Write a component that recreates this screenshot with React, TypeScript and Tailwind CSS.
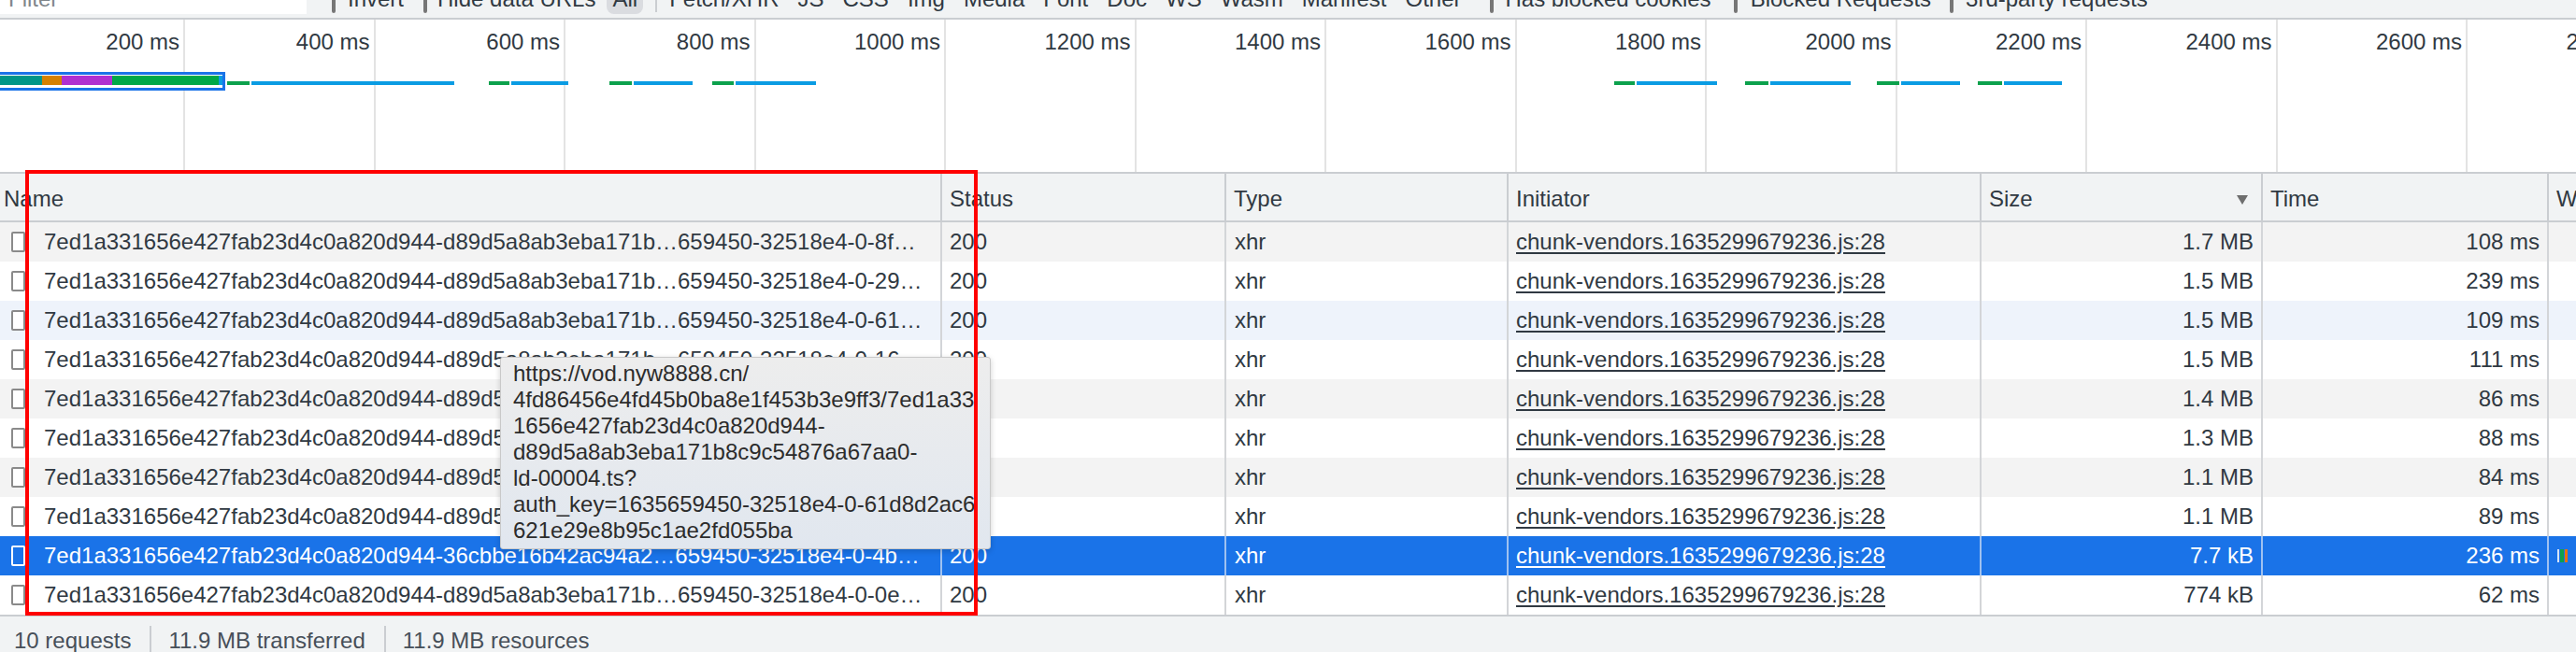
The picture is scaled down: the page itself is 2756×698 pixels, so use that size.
import React from 'react';

const gridX = Array.from({ length: 14 }, (_, i) => 197 + 203.5 * i);

// [greenStart, greenEnd, blueEnd] in px along the overview
const bars = [
  [243, 267, 486],
  [523, 545, 608],
  [652, 676, 741],
  [762, 785, 873],
  [1727, 1749, 1837],
  [1867, 1892, 1980],
  [2008, 2032, 2097],
  [2116, 2142, 2206],
];

const typeFilters = ['Fetch/XHR', 'JS', 'CSS', 'Img', 'Media', 'Font', 'Doc', 'WS', 'Wasm', 'Manifest', 'Other'];

const prefix = '7ed1a331656e427fab23d4c0a820d944-';

const rows = [
  { name: prefix + 'd89d5a8ab3eba171b…659450-32518e4-0-8f…', size: '1.7 MB', time: '108 ms', bg: 'bg-[#f3f3f3]' },
  { name: prefix + 'd89d5a8ab3eba171b…659450-32518e4-0-29…', size: '1.5 MB', time: '239 ms', bg: 'bg-white' },
  { name: prefix + 'd89d5a8ab3eba171b…659450-32518e4-0-61…', size: '1.5 MB', time: '109 ms', bg: 'bg-[#eef3fb]' },
  { name: prefix + 'd89d5a8ab3eba171b…659450-32518e4-0-16…', size: '1.5 MB', time: '111 ms', bg: 'bg-white' },
  { name: prefix + 'd89d5a8ab3eba171b…659450-32518e4-0-3a…', size: '1.4 MB', time: '86 ms', bg: 'bg-[#f3f3f3]' },
  { name: prefix + 'd89d5a8ab3eba171b…659450-32518e4-0-d1…', size: '1.3 MB', time: '88 ms', bg: 'bg-white' },
  { name: prefix + 'd89d5a8ab3eba171b…659450-32518e4-0-5c…', size: '1.1 MB', time: '84 ms', bg: 'bg-[#f3f3f3]' },
  { name: prefix + 'd89d5a8ab3eba171b…659450-32518e4-0-7e…', size: '1.1 MB', time: '89 ms', bg: 'bg-white' },
  { name: prefix + '36cbbe16b42ac94a2…659450-32518e4-0-4b…', size: '7.7 kB', time: '236 ms', bg: 'bg-[#1a73e8]', selected: true },
  { name: prefix + 'd89d5a8ab3eba171b…659450-32518e4-0-0e…', size: '774 kB', time: '62 ms', bg: 'bg-white' },
];

const tooltipLines = [
  'https://vod.nyw8888.cn/',
  '4fd86456e4fd45b0ba8e1f453b3e9ff3/7ed1a33',
  '1656e427fab23d4c0a820d944-',
  'd89d5a8ab3eba171b8c9c54876a67aa0-',
  'ld-00004.ts?',
  'auth_key=1635659450-32518e4-0-61d8d2ac6',
  '621e29e8b95c1ae2fd055ba',
];

const cols = 'grid grid-cols-[1006px_304px_302px_506px_301px_306px_1fr]';

function Check() {
  return <span className="w-[22px] h-[24px] shrink-0 rounded-[5px] border-2 border-[#767676] bg-white" />;
}

function Toolbar() {
  return (
    <div className="h-[21px] overflow-hidden bg-[#f1f3f4] border-b-2 border-[#cacdd1]">
      <div className="flex items-center h-[28px] -mt-[15px] whitespace-nowrap text-[24px] leading-[28px] text-[#303942]">
        <div className="w-[328px] h-[31px] bg-white flex items-center pl-[9px] text-[#80868b]">Filter</div>
        <span className="ml-[27px]"><Check /></span>
        <span className="ml-[13px]">Invert</span>
        <span className="ml-[21px]"><Check /></span>
        <span className="ml-[11px]">Hide data URLs</span>
        <span className="ml-[12px] h-[32px] px-[6px] rounded-[8px] bg-[#dadce0] flex items-center">All</span>
        <span className="ml-[13px] w-[2px] h-[28px] bg-[#cacdd1]" />
        <div className="ml-[13px] flex gap-[20px]">
          {typeFilters.map((t) => (
            <span key={t}>{t}</span>
          ))}
        </div>
        <span className="ml-[30px]"><Check /></span>
        <span className="ml-[13px]">Has blocked cookies</span>
        <span className="ml-[24px]"><Check /></span>
        <span className="ml-[14px]">Blocked Requests</span>
        <span className="ml-[20px]"><Check /></span>
        <span className="ml-[13px]">3rd-party requests</span>
      </div>
    </div>
  );
}

function Overview() {
  return (
    <div className="relative h-[163px] bg-white overflow-hidden">
      {gridX.map((x, i) => (
        <React.Fragment key={i}>
          <div className="absolute top-0 bottom-0 w-[2px] bg-[#e3e3e3]" style={{ left: x - 1 }} />
          <span
            className="absolute top-[10px] text-[24px] leading-[28px] text-[#303942] whitespace-nowrap"
            style={{ right: 2756 - x + 5 }}
          >
            {(i + 1) * 200} ms
          </span>
        </React.Fragment>
      ))}

      {/* selected request in the overview */}
      <div className="absolute left-[-3px] top-[56px] w-[244px] h-[20px] border-[3px] border-[#1a73e8] pt-[1px] bg-white">
        <div className="flex h-[10px]">
          <span className="w-[45px] bg-[#009688]" />
          <span className="w-[21px] bg-[#d68100]" />
          <span className="w-[54px] bg-[#b02fd0]" />
          <span className="w-[114px] bg-[#00a847]" />
          <span className="w-[4px] bg-[#0a9ce3]" />
        </div>
      </div>

      {bars.map(([g0, g1, b1], i) => (
        <React.Fragment key={i}>
          <span className="absolute top-[66px] h-[4px] bg-[#0ca14c]" style={{ left: g0, width: g1 - g0 }} />
          <span className="absolute top-[66px] h-[4px] bg-[#0a9ce3]" style={{ left: g1 + 2, width: b1 - g1 - 2 }} />
        </React.Fragment>
      ))}
    </div>
  );
}

function Header() {
  const cell = 'flex items-center h-full border-l-2 border-[#cacdd1] pl-[8px] pt-[4px] overflow-hidden whitespace-nowrap';
  return (
    <div className={`${cols} h-[54px] bg-[#f1f3f4] border-t-2 border-b-2 border-[#cacdd1] text-[24px] leading-[28px] text-[#303942]`}>
      <div className="flex items-center h-full pl-[4px] pt-[4px]">Name</div>
      <div className={cell}>Status</div>
      <div className={cell}>Type</div>
      <div className={cell}>Initiator</div>
      <div className={`${cell} justify-between pr-[14px]`}>
        <span>Size</span>
        <svg width="12" height="11" viewBox="0 0 12 11">
          <polygon points="0,1 12,1 6,11" fill="#6e6e6e" />
        </svg>
      </div>
      <div className={cell}>Time</div>
      <div className={`${cell} pl-[6px]`}>Waterfall</div>
    </div>
  );
}

function Row({ r }: { r: (typeof rows)[number] }) {
  const sel = !!r.selected;
  const text = sel ? 'text-white' : 'text-[#303942]';
  const cell = `flex items-center h-full border-l-2 ${sel ? 'border-[#9fc1f0]' : 'border-[#d3d5d8]'} overflow-hidden whitespace-nowrap`;
  return (
    <div className={`${cols} h-[42px] ${r.bg} ${text} text-[24px] leading-[28px]`}>
      <div className="flex items-center h-full pl-[12px] overflow-hidden whitespace-nowrap">
        <span
          className={`w-[15px] h-[22px] shrink-0 rounded-[2px] border-2 ${sel ? 'border-white' : 'border-[#8a8a8a] bg-white'}`}
        />
        <span className="ml-[20px]">{r.name}</span>
      </div>
      <div className={`${cell} pl-[8px]`}>200</div>
      <div className={`${cell} pl-[9px]`}>xhr</div>
      <div className={`${cell} pl-[8px]`}>
        <span className="underline underline-offset-[3px]">chunk-vendors.1635299679236.js:28</span>
      </div>
      <div className={`${cell} justify-end pr-[8px]`}>{r.size}</div>
      <div className={`${cell} justify-end pr-[8px]`}>{r.time}</div>
      <div className={`${cell} pl-[9px] gap-[1px]`}>
        {sel && (
          <>
            <span className="w-[2px] h-[14px] bg-[#d6e4f7]" />
            <span className="w-[4px] h-[14px] bg-[#0ca14c]" />
            <span className="w-[3px] h-[14px] bg-[#e8710a]" />
          </>
        )}
      </div>
    </div>
  );
}

function Footer() {
  return (
    <div className="h-[60px] bg-[#f1f3f4] border-t-2 border-[#cacdd1] flex items-start pt-[12px] pl-[15px] text-[24px] leading-[28px] text-[#474f59] whitespace-nowrap">
      <span>10 requests</span>
      <span className="ml-[20px] -mt-[2px] w-[2px] h-[40px] bg-[#cacdd1]" />
      <span className="ml-[18px]">11.9 MB transferred</span>
      <span className="ml-[20px] -mt-[2px] w-[2px] h-[40px] bg-[#cacdd1]" />
      <span className="ml-[18px]">11.9 MB resources</span>
    </div>
  );
}

export default function App() {
  return (
    <div className="relative w-[2756px] h-[698px] overflow-hidden bg-white font-['Liberation_Sans',Arial,sans-serif]">
      <Toolbar />
      <Overview />
      <Header />
      {rows.map((r, i) => (
        <Row key={i} r={r} />
      ))}
      <Footer />

      {/* URL tooltip */}
      <div className="absolute left-[535px] top-[382px] w-[525px] h-[206px] rounded-[3px] border border-[#c9c9c9] bg-linear-to-b from-[#ededed] to-[#e1e7ef] shadow-[0_2px_6px_rgba(0,0,0,0.18)] pl-[13px] pt-[3px] text-[24px] leading-[28px] text-[#2c2c2c] whitespace-nowrap overflow-hidden">
        {tooltipLines.map((l, i) => (
          <div key={i}>{l}</div>
        ))}
      </div>

      {/* red annotation box */}
      <div className="absolute left-[27px] top-[182px] w-[1019px] h-[477px] border-4 border-[#ff0000] pointer-events-none" />
    </div>
  );
}
